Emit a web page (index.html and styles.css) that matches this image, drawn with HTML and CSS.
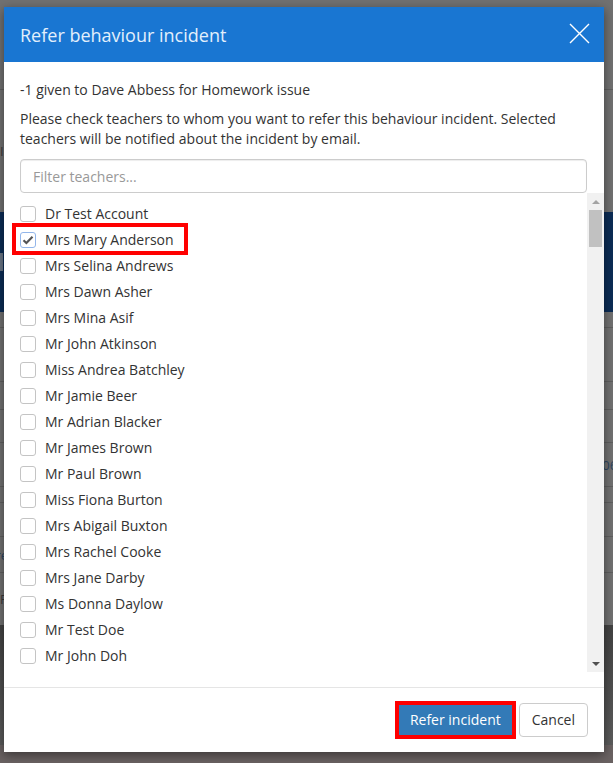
FILE: index.html
```html
<!DOCTYPE html>
<html lang="en">
<head>
<meta charset="utf-8">
<title>Refer behaviour incident</title>
<link rel="stylesheet" href="styles.css">
</head>
<body>
<div class="page">
  <div class="bg-row bg-nav"></div>
  <div class="bg-row bg-sub"><span class="bg-text bg-left">I</span></div>
  <div class="bg-row bg-hero"><span class="bg-chip"></span></div>
  <div class="bg-row h16"></div>
  <div class="bg-row h54"></div>
  <div class="bg-row h28"></div>
  <div class="bg-row h33"></div>
  <div class="bg-row h44"><span class="bg-text bg-link bg-date">2/06/2023</span></div>
  <div class="bg-row h16"></div>
  <div class="bg-row h34"></div>
  <div class="bg-row h36"><span class="bg-text bg-link bg-more">More</span></div>
  <div class="bg-row h52"><span class="bg-text bg-left">F</span></div>
  <div class="bg-footer"></div>
  <div class="bg-bottom"></div>
</div>

<div class="modal">
  <div class="modal-header">
    <h4 class="modal-title">Refer behaviour incident</h4>
    <button class="close" type="button" aria-label="Close">
      <svg width="21" height="21" viewBox="0 0 21 21"><path d="M1 1L20 20M20 1L1 20" stroke="#fff" stroke-width="1.4" fill="none"/></svg>
    </button>
  </div>
  <div class="modal-body">
    <p class="summary">-1 given to Dave Abbess for Homework issue</p>
    <p class="intro">Please check teachers to whom you want to refer this behaviour incident. Selected teachers will be notified about the incident by email.</p>
    <input class="filter" type="text" placeholder="Filter teachers...">
    <div class="teacher-list">
      <div class="items">
        <label class="item"><span class="cb"></span>Dr Test Account</label>
        <label class="item highlighted"><span class="cb checked"><svg width="12" height="10" viewBox="0 0 12 10"><path d="M1.5 5.2L4.4 8L10.5 1.8" stroke="#555" stroke-width="2.2" fill="none"/></svg></span>Mrs Mary Anderson</label>
        <label class="item"><span class="cb"></span>Mrs Selina Andrews</label>
        <label class="item"><span class="cb"></span>Mrs Dawn Asher</label>
        <label class="item"><span class="cb"></span>Mrs Mina Asif</label>
        <label class="item"><span class="cb"></span>Mr John Atkinson</label>
        <label class="item"><span class="cb"></span>Miss Andrea Batchley</label>
        <label class="item"><span class="cb"></span>Mr Jamie Beer</label>
        <label class="item"><span class="cb"></span>Mr Adrian Blacker</label>
        <label class="item"><span class="cb"></span>Mr James Brown</label>
        <label class="item"><span class="cb"></span>Mr Paul Brown</label>
        <label class="item"><span class="cb"></span>Miss Fiona Burton</label>
        <label class="item"><span class="cb"></span>Mrs Abigail Buxton</label>
        <label class="item"><span class="cb"></span>Mrs Rachel Cooke</label>
        <label class="item"><span class="cb"></span>Mrs Jane Darby</label>
        <label class="item"><span class="cb"></span>Ms Donna Daylow</label>
        <label class="item"><span class="cb"></span>Mr Test Doe</label>
        <label class="item"><span class="cb"></span>Mr John Doh</label>
        <label class="item"><span class="cb"></span>Mr Daniel Dunn</label>
      </div>
      <div class="scrollbar">
        <div class="sb-btn"><span class="arrow-up"></span></div>
        <div class="sb-track"><div class="sb-thumb"></div></div>
        <div class="sb-btn"><span class="arrow-down"></span></div>
      </div>
    </div>
  </div>
  <div class="modal-footer">
    <button class="btn btn-primary" type="button">Refer incident</button>
    <button class="btn btn-default" type="button">Cancel</button>
  </div>
</div>
</body>
</html>
```

FILE: styles.css
```css
*, *::before, *::after { box-sizing: border-box; }

html, body {
  margin: 0;
  padding: 0;
}

body {
  width: 613px;
  height: 763px;
  overflow: hidden;
  position: relative;
  font-family: "Open Sans", "Noto Sans", sans-serif;
  font-size: 14px;
  line-height: 20px;
  color: #333;
  background: #707070;
}

/* ---------- dimmed page behind the dialog ---------- */
.page {
  display: flex;
  flex-direction: column;
  height: 763px;
  background: #717171;
}

.bg-row {
  flex: none;
  display: flex;
  align-items: center;
  border-bottom: 1px solid #5f5f5f;
  padding: 0 2px;
  white-space: nowrap;
  overflow: hidden;
}

.bg-nav { height: 90px; }
.bg-sub { height: 122px; border-bottom: none; }
.bg-hero { height: 100px; background: #0b2c55; border-bottom: none; }
.h16 { height: 16px; }
.h28 { height: 28px; }
.h33 { height: 33px; }
.h34 { height: 34px; }
.h36 { height: 36px; }
.h44 { height: 44px; }
.h52 { height: 52px; border-bottom: none; }
.h54 { height: 54px; }

.bg-text {
  font-size: 13px;
  color: #3a3a3a;
}

.bg-link { color: #2d4560; }

.bg-left { margin-left: -2px; }

.bg-date { margin-left: 588px; }

.bg-more { margin-left: -26px; }

.bg-chip {
  width: 3px;
  height: 18px;
  background: #6a7585;
  margin-left: -2px;
}

.bg-footer {
  flex: none;
  height: 120px;
  background: linear-gradient(#424242, #5b5b5b);
}

.bg-bottom {
  flex: 1;
  background: #6a6262;
}

/* ---------- modal ---------- */
.modal {
  position: absolute;
  left: 4px;
  top: 7px;
  width: 600px;
  height: 745px;
  background: #fff;
  display: flex;
  flex-direction: column;
  box-shadow: 0 3px 10px rgba(0, 0, 0, 0.45);
}

.modal-header {
  flex: none;
  height: 55px;
  background: #1976d2;
  display: flex;
  align-items: center;
  justify-content: space-between;
  padding: 0 14px 0 16px;
}

.modal-title {
  margin: 0;
  font-size: 18px;
  font-weight: 400;
  line-height: 24px;
  color: #e2effc;
}

.close {
  border: 0;
  background: none;
  padding: 0;
  width: 21px;
  height: 21px;
  margin-top: -3px;
  display: flex;
}

.modal-body {
  flex: 1;
  display: flex;
  flex-direction: column;
  padding: 18px 17px 15px 16px;
  min-height: 0;
}

.summary {
  margin: 0 0 9px;
}

.intro {
  margin: 0 0 10px;
}

.filter {
  flex: none;
  width: 100%;
  height: 34px;
  padding: 6px 12px;
  font: inherit;
  color: #555;
  border: 1px solid #ccc;
  border-radius: 4px;
  box-shadow: inset 0 1px 1px rgba(0, 0, 0, 0.075);
  outline: none;
}

.filter::placeholder { color: #999; }

.teacher-list {
  flex: 1;
  min-height: 0;
  display: flex;
  margin-right: -17px;
}

.items {
  flex: 1;
  min-width: 0;
  overflow: visible;
  clip-path: inset(0 0 0 -12px);
  padding-top: 8px;
  display: flex;
  flex-direction: column;
}

.item {
  flex: none;
  height: 26px;
  display: flex;
  align-items: center;
  position: relative;
  white-space: nowrap;
}

.cb {
  flex: none;
  width: 16px;
  height: 16px;
  border: 1px solid #c4c4c4;
  border-radius: 3px;
  background: #fff;
  margin-right: 9px;
  display: flex;
  align-items: center;
  justify-content: center;
}

.cb.checked {
  border-color: #93b6ea;
}

.highlighted::after {
  content: "";
  position: absolute;
  left: -8px;
  top: -4px;
  width: 176px;
  bottom: -2px;
  border: 4px solid #ff0000;
}

.scrollbar {
  flex: none;
  width: 17px;
  background: #f1f1f1;
  display: flex;
  flex-direction: column;
}

.sb-btn {
  flex: none;
  height: 17px;
  display: flex;
  align-items: center;
  justify-content: center;
}

.arrow-up {
  width: 0;
  height: 0;
  border-left: 4px solid transparent;
  border-right: 4px solid transparent;
  border-bottom: 4px solid #a3a3a3;
}

.arrow-down {
  width: 0;
  height: 0;
  border-left: 4px solid transparent;
  border-right: 4px solid transparent;
  border-top: 4px solid #505050;
}

.sb-track {
  flex: 1;
  padding: 0 2px;
}

.sb-thumb {
  height: 37px;
  background: #c1c1c1;
}

.modal-footer {
  flex: none;
  border-top: 1px solid #e5e5e5;
  padding: 15px 16px 15px;
  display: flex;
  justify-content: flex-end;
  gap: 5px;
}

.btn {
  height: 34px;
  font: inherit;
  line-height: 20px;
  border-radius: 4px;
  padding: 6px 12px;
  cursor: pointer;
}

.btn-primary {
  background: #337ab7;
  color: #fff;
  border: 2px solid #ff0000;
  border-radius: 0;
  outline: 2px solid #ff0000;
  padding: 5px 11px;
}

.btn-default {
  background: #fff;
  color: #333;
  border: 1px solid #ccc;
}
```
